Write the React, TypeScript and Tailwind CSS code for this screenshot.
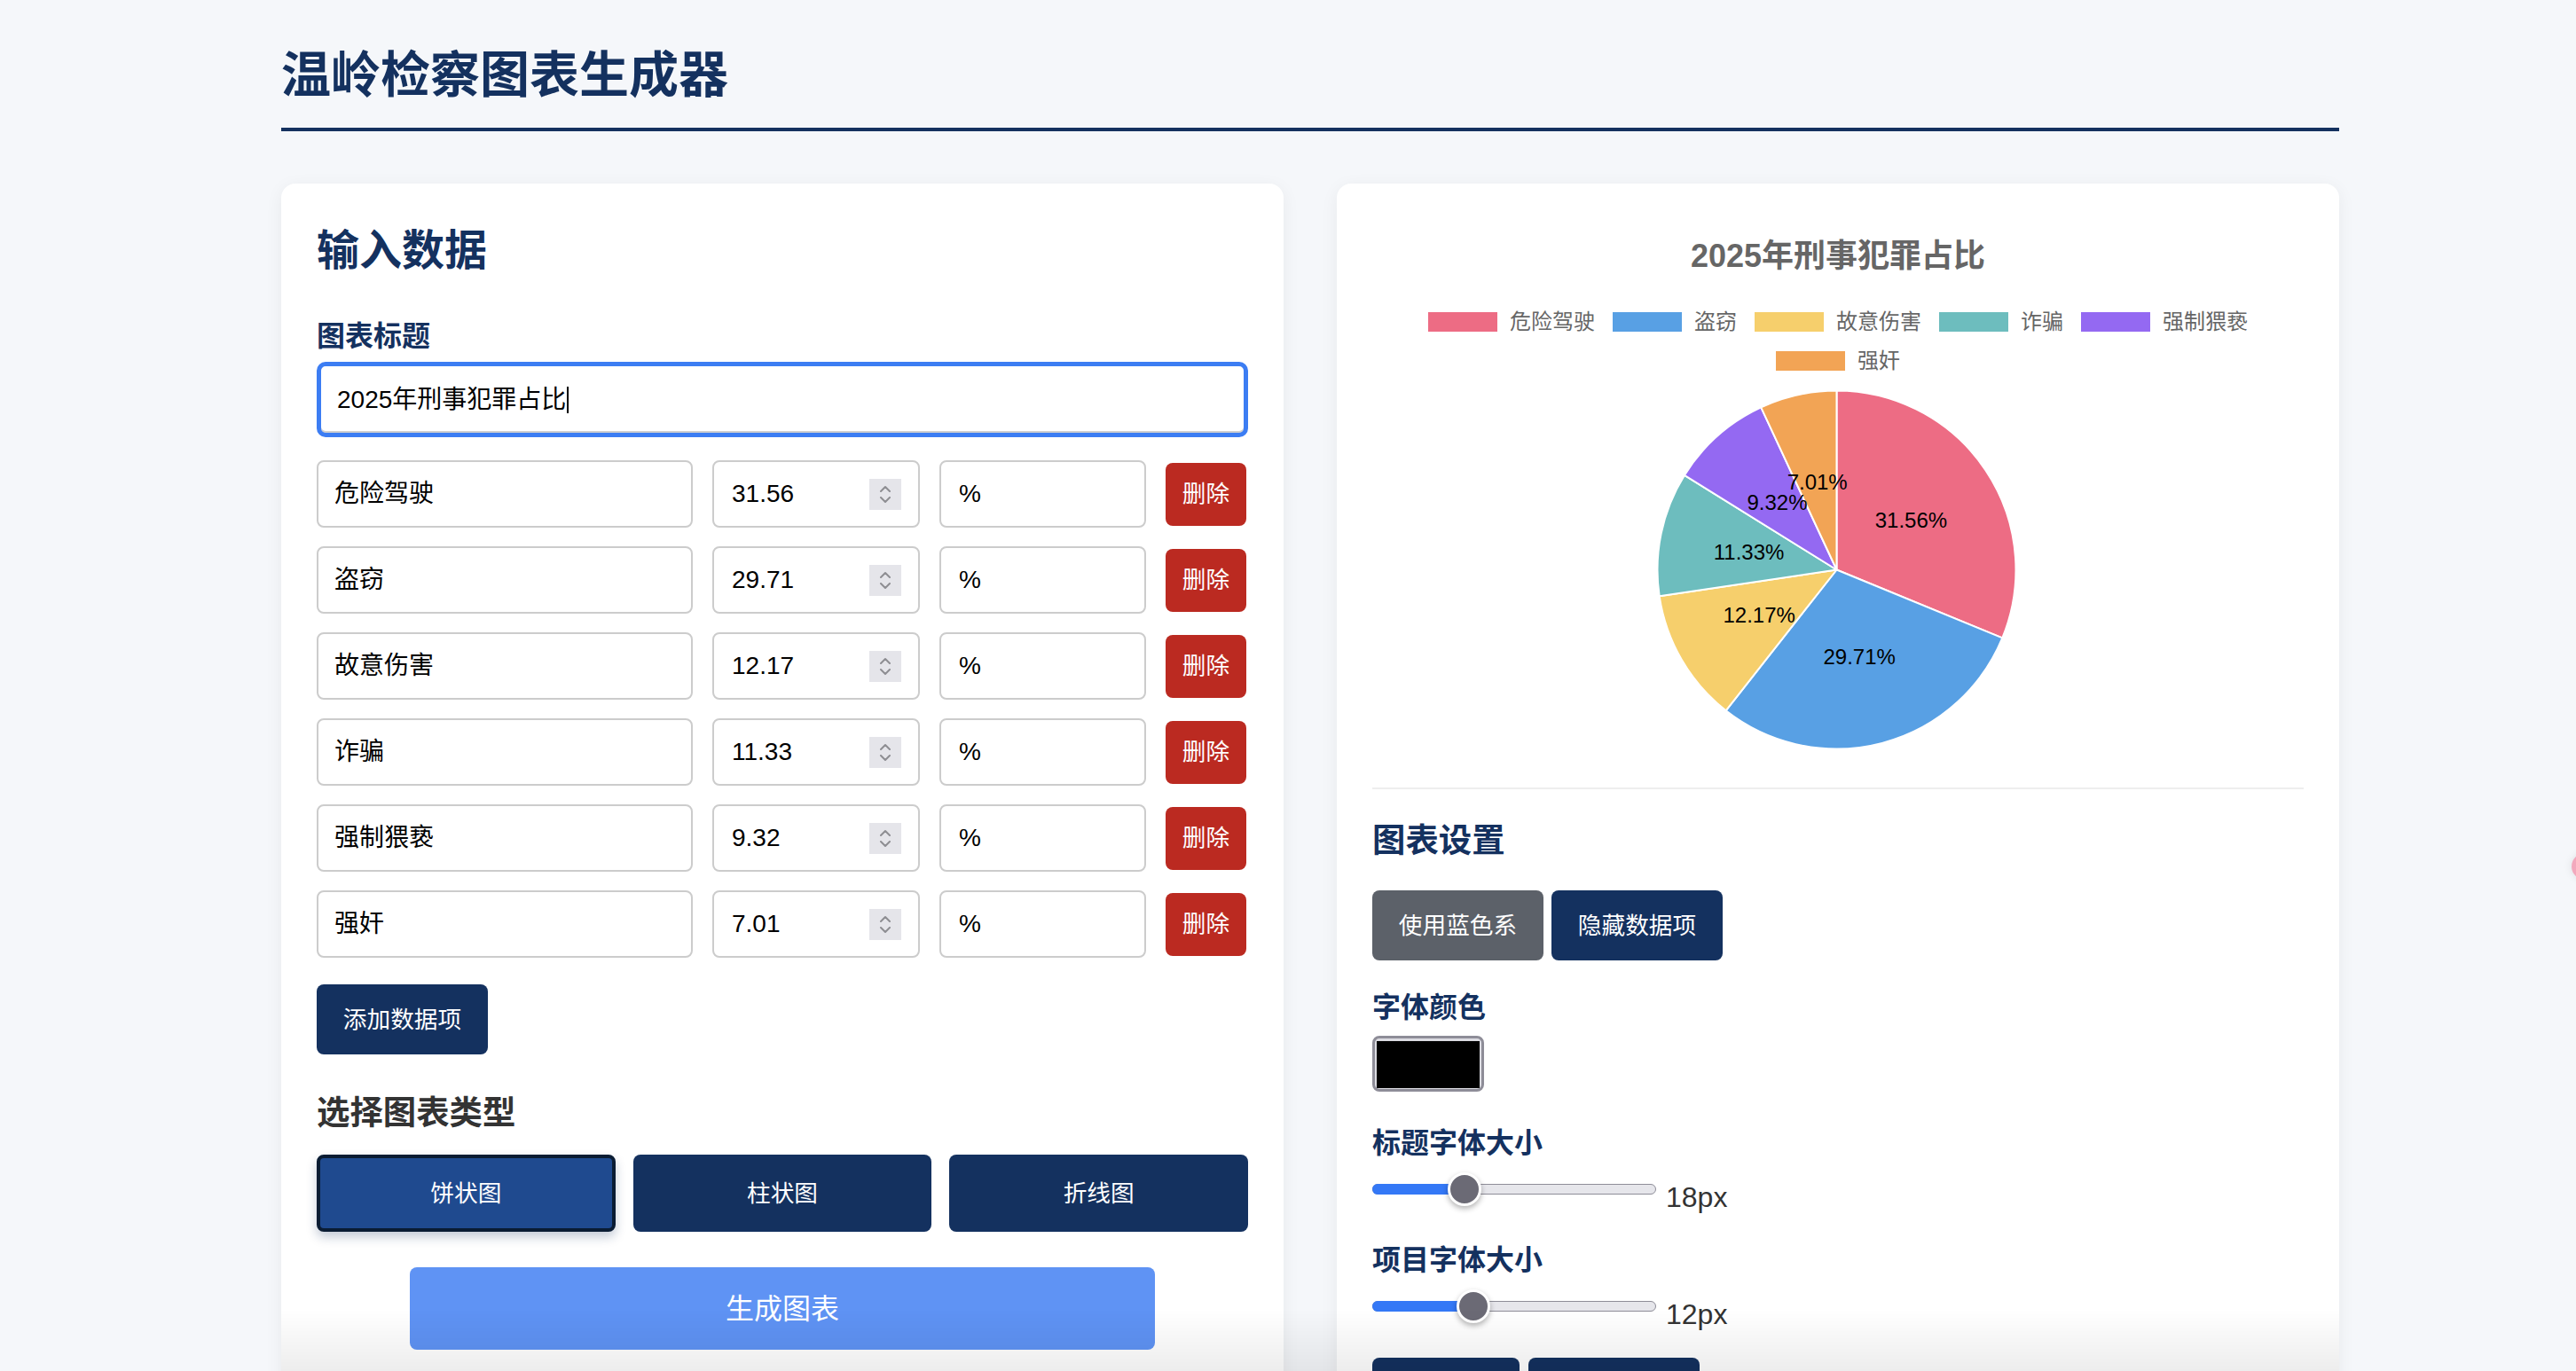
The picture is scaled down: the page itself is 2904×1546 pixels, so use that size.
const items = [
  { name: '危险驾驶', value: 31.56, color: '#ED6C84' },
  { name: '盗窃', value: 29.71, color: '#58A0E4' },
  { name: '故意伤害', value: 12.17, color: '#F6CF6C' },
  { name: '诈骗', value: 11.33, color: '#6DBDBE' },
  { name: '强制猥亵', value: 9.32, color: '#9469F2' },
  { name: '强奸', value: 7.01, color: '#F2A455' },
];

const navy = 'text-[#14315f]';

function PieChart() {
  const cx = 523.5;
  const cy = 202.5;
  const r = 202;
  const total = items.reduce((s, i) => s + i.value, 0);
  let start = 0;
  const slices = items.map((item) => {
    const sweep = (item.value / total) * Math.PI * 2;
    const a0 = start;
    const a1 = start + sweep;
    start = a1;
    const x0 = cx + r * Math.sin(a0);
    const y0 = cy - r * Math.cos(a0);
    const x1 = cx + r * Math.sin(a1);
    const y1 = cy - r * Math.cos(a1);
    const mid = (a0 + a1) / 2;
    return {
      ...item,
      d: `M ${cx} ${cy} L ${x0} ${y0} A ${r} ${r} 0 ${sweep > Math.PI ? 1 : 0} 1 ${x1} ${y1} Z`,
      lx: cx + (r / 2) * Math.sin(mid),
      ly: cy - (r / 2) * Math.cos(mid),
    };
  });

  return (
    <svg width="1050" height="405" viewBox="0 0 1050 405" className="mt-[21px] block">
      {slices.map((s) => (
        <path key={s.name} d={s.d} fill={s.color} stroke="#fff" strokeWidth="2" strokeLinejoin="round" />
      ))}
      {slices.map((s) => (
        <text
          key={s.name + 'l'}
          x={s.lx}
          y={s.ly}
          textAnchor="middle"
          dominantBaseline="central"
          fontSize="24"
          fontFamily="Liberation Sans, Arial, sans-serif"
          fill="#000"
        >
          {s.value.toFixed(2)}%
        </text>
      ))}
    </svg>
  );
}

// the little up/down stepper inside number fields
function NumberSpinner() {
  return (
    <div className="flex h-[35px] w-[36px] flex-col items-center justify-center gap-[5px] bg-[#e5e5ea]">
      <svg width="14" height="8" viewBox="0 0 14 8" fill="none" stroke="#8e8e93" strokeWidth="2" strokeLinecap="round" strokeLinejoin="round">
        <polyline points="2,7 7,2 12,7" />
      </svg>
      <svg width="14" height="8" viewBox="0 0 14 8" fill="none" stroke="#8e8e93" strokeWidth="2" strokeLinecap="round" strokeLinejoin="round">
        <polyline points="2,1 7,6 12,1" />
      </svg>
    </div>
  );
}

function DataRow({ name, value }: { name: string; value: number }) {
  return (
    <div className="flex h-[76px] items-center gap-[22px] text-[28px] text-black">
      <div className="flex h-[76px] w-[424px] items-center rounded-[8px] border-2 border-[#cccccc] pl-[18px]">
        {name}
      </div>
      <div className="flex h-[76px] w-[234px] items-center justify-between rounded-[8px] border-2 border-[#cccccc] pl-[20px] pr-[19px]">
        <span>{value.toFixed(2)}</span>
        <NumberSpinner />
      </div>
      <div className="flex h-[76px] w-[233px] items-center rounded-[8px] border-2 border-[#cccccc] pl-[20px]">
        %
      </div>
      <button className="h-[71px] w-[91px] rounded-[8px] bg-[#bb2a21] text-[26.67px] text-white">删除</button>
    </div>
  );
}

function Slider({ pos, label }: { pos: number; label: string }) {
  return (
    <div className="mt-[16px] flex h-[40px] items-center">
      <div className="relative h-[12px] w-[320px] rounded-full border border-[#8e8d98] bg-[#e6e6eb]">
        <div className="absolute inset-y-[-1px] left-[-1px] rounded-full bg-[#3478f6]" style={{ width: pos }} />
        <div
          className="absolute top-1/2 h-[38px] w-[38px] -translate-x-1/2 -translate-y-1/2 rounded-full border-[3px] border-white bg-[#6b6a75] shadow-[0_3px_6px_rgba(0,0,0,0.3)]"
          style={{ left: pos }}
        />
      </div>
      <span className="ml-[11px] mt-[17px] text-[32px] leading-[32px] text-[#333]">{label}</span>
    </div>
  );
}

export default function App() {
  return (
    <div className="min-h-screen bg-[#f5f7fa] font-[Liberation_Sans,Noto_Sans_CJK_SC,sans-serif]">
      <div className="ml-[317px] w-[2320px]">
        <h1 className={`border-b-4 border-[#14315f] pb-[31px] pt-[57px] text-[56px] font-bold leading-[56px] ${navy}`}>
          温岭检察图表生成器
        </h1>

        <div className="mt-[59px] grid grid-cols-2 gap-[60px]">
          {/* left: input */}
          <div className="rounded-[16px] bg-white p-[40px] shadow-[0_4px_20px_rgba(0,0,0,0.06)]">
            <h2 className={`mt-[12px] text-[48px] font-bold leading-[48px] ${navy}`}>输入数据</h2>
            <div className={`mt-[56px] text-[32px] font-bold leading-[32px] ${navy}`}>图表标题</div>
            <div className="mt-[13px] flex h-[85px] items-center rounded-[10px] border-[5px] border-[#3c7df3] pl-[18px] text-[28px] text-black shadow-[inset_0_-2px_0_#cfcfcf]">
              2025年刑事犯罪占比
              <span className="ml-[1px] inline-block h-[30px] w-[2px] bg-black" />
            </div>

            <div className="mt-[26px] flex flex-col gap-[21px]">
              {items.map((i) => (
                <DataRow key={i.name} name={i.name} value={i.value} />
              ))}
            </div>

            <button className="mt-[30px] h-[79px] w-[193px] rounded-[8px] bg-[#14315f] text-[26.67px] text-white">
              添加数据项
            </button>

            <h3 className="mt-[47px] text-[37.4px] font-bold leading-[38px] text-[#333]">选择图表类型</h3>
            <div className="mt-[28px] grid grid-cols-3 gap-[20px]">
              <button className="h-[87px] rounded-[8px] border-4 border-[#0a1c33] bg-[#1f4a8f] text-[26.67px] text-white shadow-[0_6px_12px_rgba(20,49,95,0.25)]">
                饼状图
              </button>
              <button className="h-[87px] rounded-[8px] bg-[#14315f] text-[26.67px] text-white">柱状图</button>
              <button className="h-[87px] rounded-[8px] bg-[#14315f] text-[26.67px] text-white">折线图</button>
            </div>

            <button className="mx-auto mt-[40px] block h-[93px] w-[840px] rounded-[8px] bg-[#5f93f4] text-[32px] text-white">
              生成图表
            </button>
          </div>

          {/* right: chart + settings */}
          <div className="rounded-[16px] bg-white p-[40px] shadow-[0_4px_20px_rgba(0,0,0,0.06)]">
            <div className="mt-[24px] text-center text-[36px] font-bold leading-[36px] text-[#666]">2025年刑事犯罪占比</div>
            <div className="mx-auto mt-[44px] flex max-w-[980px] flex-wrap justify-center gap-x-[20px] gap-y-[20px]">
              {items.map((i) => (
                <div key={i.name} className="flex h-[24px] items-center gap-[14px]">
                  <span className="h-[22px] w-[78px]" style={{ backgroundColor: i.color }} />
                  <span className="text-[24px] leading-[24px] text-[#666]">{i.name}</span>
                </div>
              ))}
            </div>
            <PieChart />

            <div className="mt-[43px] border-t-2 border-[#eeeeee]" />

            <h3 className={`mt-[39px] text-[37.4px] font-bold leading-[38px] ${navy}`}>图表设置</h3>
            <div className="mt-[37px] flex gap-[9px]">
              <button className="h-[79px] w-[193px] rounded-[8px] bg-[#5c6169] text-[26.67px] text-white">使用蓝色系</button>
              <button className="h-[79px] w-[193px] rounded-[8px] bg-[#14315f] text-[26.67px] text-white">隐藏数据项</button>
            </div>

            <div className={`mt-[37px] text-[32px] font-bold leading-[32px] ${navy}`}>字体颜色</div>
            <div className="mt-[16px] h-[63px] w-[126px] rounded-[8px] border-[3px] border-[#8e8d98] bg-[#dcdce2] px-[2px] pb-[1px] pt-[3px]">
              <div className="h-full w-full bg-black" />
            </div>

            <div className={`mt-[42px] text-[32px] font-bold leading-[32px] ${navy}`}>标题字体大小</div>
            <Slider pos={103} label="18px" />

            <div className={`mt-[44px] text-[32px] font-bold leading-[32px] ${navy}`}>项目字体大小</div>
            <Slider pos={113} label="12px" />

            {/* these two sit below the fold; their labels are not visible */}
            <div className="mt-[38px] flex gap-[10px]">
              <button className="h-[79px] w-[166px] rounded-[8px] bg-[#14315f]" />
              <button className="h-[79px] w-[193px] rounded-[8px] bg-[#14315f]" />
            </div>
          </div>
        </div>
      </div>

      <div className="pointer-events-none fixed bottom-0 left-[317px] h-[70px] w-[2320px] bg-gradient-to-b from-transparent to-[rgba(0,0,0,0.07)]" />
      <div className="pointer-events-none fixed left-[2899px] top-[962px] h-[30px] w-[30px] rounded-full bg-[#f2a9bd] shadow-[0_0_10px_rgba(0,0,0,0.1)]" />
    </div>
  );
}
